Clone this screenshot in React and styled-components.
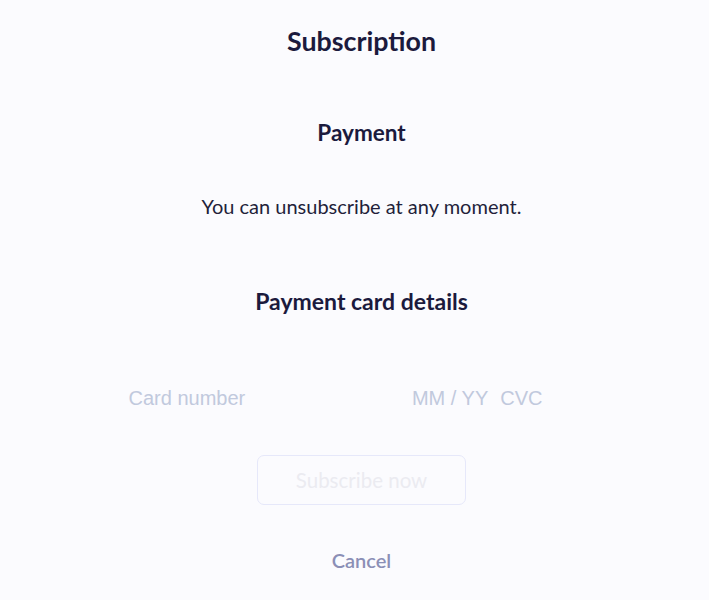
import React from 'react';
import styled, { createGlobalStyle } from 'styled-components';

const GlobalStyle = createGlobalStyle`
  html, body {
    margin: 0;
    padding: 0;
    background: #fbfbfe;
  }
  body {
    font-family: Lato, "Open Sans", sans-serif;
  }
`;

const Page = styled.div`
  width: 709px;
  height: 600px;
  box-sizing: border-box;
  padding-left: 14px;
  display: flex;
  flex-direction: column;
  align-items: center;
  background: #fbfbfe;
  overflow: hidden;
`;

const Title = styled.h1`
  margin: 26px 0 0;
  font-size: 26.8px;
  line-height: 30px;
  font-weight: 700;
  color: #1b1a3d;
`;

const Heading = styled.h2`
  margin: ${(p) => p.top}px 0 0;
  font-size: ${(p) => p.size}px;
  line-height: 26px;
  font-weight: 700;
  color: #1b1a3d;
`;

const Note = styled.p`
  margin: 48px 0 0;
  font-size: 20px;
  line-height: 24px;
  color: #231f3a;
`;

const CardRow = styled.div`
  margin-top: 72px;
  width: 466px;
  display: flex;
  align-items: center;
  font-family: "Liberation Sans", Arial, sans-serif;
  font-size: 20px;
  line-height: 24px;
  color: #c1c9dd;
`;

const CardNumber = styled.span`
  flex: 1;
`;

const Field = styled.span`
  margin-right: ${(p) => p.gap}px;
`;

const SubscribeButton = styled.button`
  margin-top: 45px;
  width: 209px;
  height: 50px;
  border: 1px solid #e6e8fa;
  border-radius: 7px;
  background: #fbfbfe;
  font-family: Lato, "Open Sans", sans-serif;
  font-size: 20.5px;
  color: #ebebf1;
  cursor: default;
`;

const CancelLink = styled.button`
  margin-top: 43px;
  border: none;
  background: none;
  font-family: Lato, "Open Sans", sans-serif;
  font-size: 20px;
  font-weight: 600;
  color: #8b8fb6;
  padding: 0;
  cursor: pointer;
`;

const App = () => {
  return (
    <>
      <GlobalStyle />
      <Page>
        <Title>Subscription</Title>
        <Heading top={64} size={22.5}>Payment</Heading>
        <Note>You can unsubscribe at any moment.</Note>
        <Heading top={70} size={23}>Payment card details</Heading>
        <CardRow>
          <CardNumber>Card number</CardNumber>
          <Field gap={12}>MM / YY</Field>
          <Field gap={52}>CVC</Field>
        </CardRow>
        <SubscribeButton disabled>Subscribe now</SubscribeButton>
        <CancelLink>Cancel</CancelLink>
      </Page>
    </>
  );
};

export default App;
